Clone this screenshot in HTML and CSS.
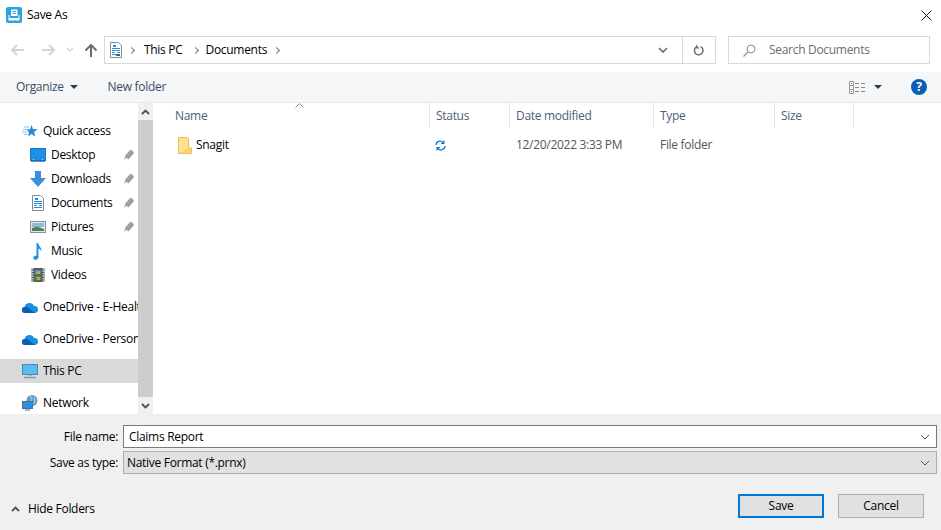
FILE: index.html
```html
<!DOCTYPE html>
<html lang="en">
<head>
    <meta charset="UTF-8">
    <title>Save As</title>
    <link rel="stylesheet" href="styles.css">
</head>
<body>
    <div class="dialog">
        <div class="titlebar">
            <svg class="app-icon" width="16" height="16" viewBox="0 0 16 16"><rect width="16" height="16" rx="2" fill="#29a3e2"/><path d="M5 2.500h6.500V9H5z" fill="#fff"/><path d="M6.500 4.500h3.500M6.500 6.500h3.500" stroke="#29a3e2"/><path d="M2.500 8v5.500h11V8H12.500v3H3.500V8z" fill="#fff"/></svg>
            <span class="title">Save As</span>
            <svg class="close" width="11" height="11" viewBox="0 0 11 11"><path d="M.5.500l10 10M10.500.500l-10 10" stroke="#111" fill="none"/></svg>
        </div>

        <div class="navbar">
            <div class="nav-buttons">
                <svg width="16" height="14" viewBox="0 0 16 14"><path d="M14 7H2M7 2L2 7l5 5" stroke="#d4d4d4" stroke-width="2" fill="none"/></svg>
                <svg width="16" height="14" viewBox="0 0 16 14"><path d="M2 7h12M9 2l5 5-5 5" stroke="#d4d4d4" stroke-width="2" fill="none"/></svg>
                <svg width="8" height="6" viewBox="0 0 8 6"><path d="M1 1l3 3 3-3" stroke="#d8d8d8" stroke-width="1.400" fill="none"/></svg>
                <svg width="14" height="14" viewBox="0 0 14 14"><path d="M7 14V2M1.500 7.500L7 2l5.500 5.500" stroke="#6d6d6d" stroke-width="2" fill="none"/></svg>
            </div>
            <div class="address">
                <svg class="doc" width="12" height="16" viewBox="0 0 12 16"><path d="M.5.500h8l3 3v12H.5z" fill="#fff" stroke="#8a8a8a"/><path d="M2 6.500h8M2 8.500h8M2 10.500h3M7 10.500h3M2 12.500h8" stroke="#2a8ad8"/><path d="M3 4h3" stroke="#2a8ad8" stroke-width="2"/><path d="M6 12h4v2H6z" fill="#44606a"/></svg>
                <span class="crumb-sep"></span>
                <span class="crumb crumb-first">This PC</span>
                <span class="crumb-sep"></span>
                <span class="crumb crumb-last">Documents</span>
                <span class="crumb-sep"></span>
                <span class="spacer"></span>
                <svg class="addr-drop" width="10" height="7" viewBox="0 0 10 7"><path d="M1 1l4 4 4-4" stroke="#6d6d6d" stroke-width="1.600" fill="none"/></svg>
                <span class="refresh">
                    <svg width="12" height="13" viewBox="0 0 12 13"><path d="M7.500 2.600A4.300 4.300 0 1 1 3 3.200" stroke="#707070" stroke-width="1.500" fill="none"/><path d="M3 .500v4h3.500z" fill="#707070"/></svg>
                </span>
            </div>
            <div class="search">
                <svg width="13" height="13" viewBox="0 0 13 13"><circle cx="8" cy="5" r="4" stroke="#8c8c8c" fill="none"/><path d="M5 8l-4.500 4.500" stroke="#b08f6a" stroke-width="1.200"/></svg>
                <span>Search Documents</span>
            </div>
        </div>

        <div class="toolbar">
            <span class="tool organize">Organize <i class="caret"></i></span>
            <span class="tool newfolder">New folder</span>
            <span class="spacer"></span>
            <svg class="viewicon" width="16" height="13" viewBox="0 0 16 13"><path d="M.5.500h4v12h-4zM.5 4.500h4M.5 8.500h4" stroke="#9a9a9a" fill="#fff"/><path d="M6 2.500h4M12 2.500h4M6 6.500h4M12 6.500h4M6 10.500h4M12 10.500h4" stroke="#8a8a8a"/><path d="M2 2h1v1H2z" fill="#2a7ad8"/><path d="M2 10h1v1H2z" fill="#d83030"/></svg>
            <i class="caret view-caret"></i>
            <span class="help">?</span>
        </div>

        <div class="main">
            <nav class="sidebar">
                <ul class="tree">
                    <li class="group first">
                        <svg width="16" height="14" viewBox="0 0 16 14"><path d="M9.500 1l1.500 4 4.500.3-3.300 2.700 1.100 4.500-3.800-2.500L6 12.500l1-4.300-2.500-2.700 3.500-.3z" fill="#2a8ad8"/><path d="M1 5.500h4M0 8h5M2 3h5M2 10.500h3" stroke="#8cc4ee"/></svg>
                        Quick access
                    </li>
                    <li class="sub pinned">
                        <svg width="16" height="14" viewBox="0 0 16 14"><rect x=".5" y=".5" width="15" height="12" fill="#1c8fe8" stroke="#1878c8"/><path d="M1 13h14" stroke="#1268b0" stroke-width="1.400"/><path d="M3 11.500h1M12 11.500h1" stroke="#bfe2fa"/></svg>
                        Desktop
                    </li>
                    <li class="sub pinned">
                        <svg width="16" height="16" viewBox="0 0 16 16"><path d="M5 0h6v7h5l-8 9-8-9h5z" fill="#3d8fdc"/></svg>
                        Downloads
                    </li>
                    <li class="sub pinned">
                        <svg width="16" height="16" viewBox="0 0 16 16"><path d="M2.500.500h8l3 3v12h-11z" fill="#fff" stroke="#8a8a8a"/><path d="M4 6.500h8M4 8.500h8M4 10.500h3M9 10.500h3M4 12.500h8" stroke="#1f8ae0"/><path d="M5 4h3" stroke="#1f8ae0" stroke-width="2"/></svg>
                        Documents
                    </li>
                    <li class="sub pinned">
                        <svg width="16" height="14" viewBox="0 0 16 14"><rect x=".5" y="1.500" width="15" height="11" fill="#dce8ee" stroke="#8f8f8f"/><path d="M2 3h12v4H2z" fill="#8cbcd8"/><path d="M2 8l5-1.500 7 2.500v2H2z" fill="#4f7f5a"/></svg>
                        Pictures
                    </li>
                    <li class="sub">
                        <svg width="16" height="17" viewBox="0 0 16 17"><path d="M6.500 0H8c.5 3 4 4.500 3.500 8.500C11 7 10 6 8.500 5.500V14c0 2-2 3-3.500 2.800S3 15 3.500 14s2-1.500 3-1z" fill="#1c93e8"/></svg>
                        Music
                    </li>
                    <li class="sub">
                        <svg width="16" height="16" viewBox="0 0 16 16"><rect x="1.500" y="1" width="13" height="14" fill="#555"/><path d="M2.500 1v14M13.500 1v14" stroke="#ccc" stroke-width="2" stroke-dasharray="1.500 1"/><rect x="4.500" y="2.500" width="7" height="5" fill="#3a80c8"/><rect x="6" y="4" width="4" height="3" fill="#d8a030"/><rect x="4.500" y="8.500" width="7" height="5" fill="#3f8f5f"/><rect x="7" y="10" width="3" height="3" fill="#d8a030"/></svg>
                        Videos
                    </li>
                    <li class="group cloud">
                        <svg width="16" height="11" viewBox="0 0 16 11"><path d="M3 11a3 3 0 0 1-.5-6A5 5 0 0 1 12 4a3.500 3.500 0 0 1 1 7z" fill="#1490df"/><path d="M3 11a3 3 0 0 1-1.200-5.700C4 4 6 5 8 7l5 4z" fill="#0a5fb4"/></svg>
                        OneDrive - E-Health
                    </li>
                    <li class="group cloud">
                        <svg width="16" height="11" viewBox="0 0 16 11"><path d="M3 11a3 3 0 0 1-.5-6A5 5 0 0 1 12 4a3.500 3.500 0 0 1 1 7z" fill="#1490df"/><path d="M3 11a3 3 0 0 1-1.200-5.700C4 4 6 5 8 7l5 4z" fill="#0a5fb4"/></svg>
                        OneDrive - Personal
                    </li>
                    <li class="group selected">
                        <svg width="16" height="15" viewBox="0 0 16 15"><rect x=".5" y=".5" width="15" height="10" fill="#56bdf0" stroke="#4f88ac"/><path d="M6 11.500h4" stroke="#a8b8c4"/><path d="M2 13.500h12" stroke="#7a9ab0" stroke-width="1.400"/></svg>
                        This PC
                    </li>
                    <li class="group network">
                        <svg width="16" height="16" viewBox="0 0 16 16"><circle cx="10" cy="5.500" r="5.500" fill="#5f9dc8"/><path d="M8 1c2 1 2.500 3 1 5M12 2c1.500 2 1 5-1 7" stroke="#bcd8ea" fill="none"/><rect x=".5" y="6.500" width="10" height="7" fill="#2f8fe0" stroke="#46708c"/><path d="M3 15h5" stroke="#7fa0b8" stroke-width="1.500"/></svg>
                        Network
                    </li>
                </ul>
            </nav>
            <div class="scrollbar">
                <span class="scroll-btn"><svg width="9" height="6" viewBox="0 0 9 6"><path d="M1 5l3.500-3.500L8 5" stroke="#505050" stroke-width="1.800" fill="none"/></svg></span>
                <span class="scroll-thumb"></span>
                <span class="scroll-btn"><svg width="9" height="6" viewBox="0 0 9 6"><path d="M1 1l3.500 3.500L8 1" stroke="#505050" stroke-width="1.800" fill="none"/></svg></span>
            </div>
            <div class="files">
                <div class="file-head">
                    <svg class="sort" width="9" height="5" viewBox="0 0 9 5"><path d="M.5 4.500l4-4 4 4" stroke="#8a8a8a" fill="none"/></svg>
                    <span class="col name">Name</span>
                    <span class="col status">Status</span>
                    <span class="col date">Date modified</span>
                    <span class="col type">Type</span>
                    <span class="col size">Size</span>
                </div>
                <div class="file-row">
                    <span class="col name">
                        <svg width="14" height="17" viewBox="0 0 14 17"><path d="M.5.500h9l1 1v15H.5z" fill="#fde38e" stroke="#e8c35a"/><path d="M10.500 11h3v5.500h-13" fill="#fbd46a" stroke="#e8c35a"/></svg>
                        Snagit
                    </span>
                    <span class="col status">
                        <svg width="11" height="11" viewBox="0 0 11 11"><path d="M1 5a4 4 0 0 1 7-2.500M10 6a4 4 0 0 1-7 2.500" stroke="#1478d0" stroke-width="1.300" fill="none"/><path d="M9.500 0v4h-4zM1.500 11V7h4z" fill="#1478d0"/></svg>
                    </span>
                    <span class="col date">12/20/2022 3:33 PM</span>
                    <span class="col type">File folder</span>
                    <span class="col size"></span>
                </div>
            </div>
        </div>

        <div class="footer">
            <div class="field">
                <label>File name:</label>
                <div class="input">Claims Report<svg width="10" height="6" viewBox="0 0 10 6"><path d="M1 1l4 4 4-4" stroke="#555" fill="none"/></svg></div>
            </div>
            <div class="field">
                <label>Save as type:</label>
                <div class="input select">Native Format (*.prnx)<svg width="10" height="6" viewBox="0 0 10 6"><path d="M1 1l4 4 4-4" stroke="#555" fill="none"/></svg></div>
            </div>
            <div class="actions">
                <span class="hide-folders">
                    <svg width="9" height="6" viewBox="0 0 9 6"><path d="M1 5l3.500-3.500L8 5" stroke="#505050" stroke-width="1.800" fill="none"/></svg>
                    Hide Folders
                </span>
                <span class="spacer"></span>
                <button class="btn primary">Save</button>
                <button class="btn">Cancel</button>
            </div>
        </div>
    </div>
</body>
</html>
```

FILE: styles.css
```css
* {
    box-sizing: border-box;
}
html, body {
    margin: 0;
    padding: 0;
}
body {
    width: 941px;
    height: 530px;
    overflow: hidden;
    background: #fff;
    color: #000;
    font-family: "Open Sans", "Noto Sans", sans-serif;
    font-size: 12px;
    letter-spacing: -0.3px;
    line-height: 16px;
}
svg {
    display: block;
    flex: none;
}
.dialog {
    display: flex;
    flex-direction: column;
    height: 530px;
}
.spacer {
    flex: 1;
}

/* titlebar */
.titlebar {
    height: 30px;
    display: flex;
    align-items: center;
    padding: 0 9px 0 6px;
}
.title {
    margin-left: 5px;
    flex: 1;
}

/* navbar */
.navbar {
    height: 42px;
    display: flex;
    padding: 6px 11px 8px 0;
}
.nav-buttons {
    width: 104px;
    display: flex;
    align-items: center;
    padding-left: 10px;
}
.nav-buttons svg:nth-child(2) {
    margin-left: 14px;
}
.nav-buttons svg:nth-child(3) {
    margin-left: 10px;
}
.nav-buttons svg:nth-child(4) {
    margin-left: 10px;
}
.address {
    width: 612px;
    display: flex;
    align-items: center;
    border: 1px solid #d9d9d9;
    padding-left: 5px;
}
.crumb-first {
    margin: 0 10px;
}
.crumb-last {
    margin: 0 7px 0 8px;
}
.crumb-sep {
    width: 5px;
    height: 5px;
    border-top: 1.500px solid #777;
    border-right: 1.500px solid #777;
    transform: rotate(45deg);
    margin-left: 7px;
}
.crumb + .crumb-sep {
    margin-left: 0;
}
.addr-drop {
    margin-right: 14px;
}
.refresh {
    width: 33px;
    height: 100%;
    border-left: 1px solid #d9d9d9;
    display: flex;
    align-items: center;
    justify-content: center;
}
.search {
    width: 202px;
    margin-left: 12px;
    border: 1px solid #d9d9d9;
    display: flex;
    align-items: center;
    padding-left: 14px;
    color: #6d6d6d;
}
.search span {
    margin-left: 13px;
}

/* toolbar */
.toolbar {
    height: 31px;
    background: #f5f6f7;
    border-bottom: 1px solid #e8e9ea;
    display: flex;
    align-items: center;
    padding: 0 14px 0 16px;
    color: #3c4a66;
}
.caret {
    display: inline-block;
    width: 0;
    height: 0;
    border-left: 4px solid transparent;
    border-right: 4px solid transparent;
    border-top: 4px solid #2b3a55;
    margin-left: 3px;
    vertical-align: 2px;
}
.newfolder {
    margin-left: 30px;
}
.view-caret {
    margin: 0 29px 0 9px;
}
.help {
    width: 16px;
    height: 16px;
    border-radius: 50%;
    background: #0a5fb4;
    color: #fff;
    font-weight: 700;
    text-align: center;
    line-height: 16px;
}

/* main */
.main {
    flex: 1;
    display: flex;
    min-height: 0;
}
.sidebar {
    width: 138px;
    overflow: hidden;
}
.tree {
    list-style: none;
    margin: 0;
    padding: 0;
    white-space: nowrap;
}
.tree li {
    height: 24px;
    display: flex;
    align-items: center;
    gap: 5px;
    position: relative;
}
.group {
    padding-left: 22px;
}
.sub {
    padding-left: 30px;
}
.first {
    margin-top: 16px;
}
.cloud,
.network {
    margin-top: 8px;
}
.selected {
    margin-top: 8px;
    background: #d9d9d9;
}
/* pin */
.pinned::after {
    content: "";
    position: absolute;
    left: 127px;
    top: 7px;
    width: 5px;
    height: 9px;
    background: #a0a0a0;
    border-radius: 1px 1px 0 0;
    transform: rotate(40deg);
}
.pinned::before {
    content: "";
    position: absolute;
    left: 123px;
    top: 13px;
    width: 7px;
    height: 1px;
    background: #a0a0a0;
    transform: rotate(-50deg);
}
.scrollbar {
    width: 15px;
    margin-right: 3px;
    background: #cdcdcd;
    display: flex;
    flex-direction: column;
}
.scroll-btn {
    height: 17px;
    background: #f0f0f0;
    display: flex;
    align-items: center;
    justify-content: center;
}
.scroll-thumb {
    flex: 1;
}
.files {
    flex: 1;
    color: #1a1a1a;
}
.file-head {
    height: 25px;
    display: flex;
    position: relative;
    color: #4c607a;
}
.sort {
    position: absolute;
    left: 139px;
    top: 0;
}
.file-head .col {
    border-right: 1px solid #e5e5e5;
    display: flex;
    align-items: center;
}
.file-row {
    height: 22px;
    margin-top: 6px;
    display: flex;
    align-items: center;
}
.col {
    padding-left: 6px;
}
.name {
    width: 274px;
    padding-left: 19px;
}
.file-row .name {
    padding-left: 22px;
    display: flex;
    align-items: center;
    gap: 4px;
    color: #000;
}
.status {
    width: 80px;
}
.file-row .status {
    padding-left: 5px;
}
.date {
    width: 144px;
}
.type {
    width: 121px;
}
.size {
    width: 79px;
}
.file-row .date,
.file-row .type {
    color: #555;
}

/* footer */
.footer {
    height: 116px;
    background: #f0f0f0;
    padding: 11px 4px 0 0;
}
.field {
    display: flex;
    align-items: center;
    height: 23px;
    margin-bottom: 3px;
}
.field label {
    width: 118px;
    text-align: right;
    margin-right: 5px;
}
.input {
    flex: 1;
    height: 23px;
    background: #fff;
    border: 1px solid #7a7a7a;
    display: flex;
    align-items: center;
    justify-content: space-between;
    padding: 0 6px 0 5px;
}
.select {
    background: #e1e1e1;
    border-color: #adadad;
    padding-left: 3px;
}
.actions {
    display: flex;
    align-items: center;
    margin-top: 20px;
    padding-right: 13px;
}
.hide-folders {
    display: flex;
    align-items: center;
    gap: 8px;
    padding: 6px 0 0 11px;
}
.btn {
    width: 86px;
    height: 24px;
    margin-left: 14px;
    background: #e1e1e1;
    border: 1px solid #adadad;
    font: inherit;
    letter-spacing: inherit;
    color: #000;
    padding: 0;
}
.primary {
    border: 2px solid #0078d7;
}
```
